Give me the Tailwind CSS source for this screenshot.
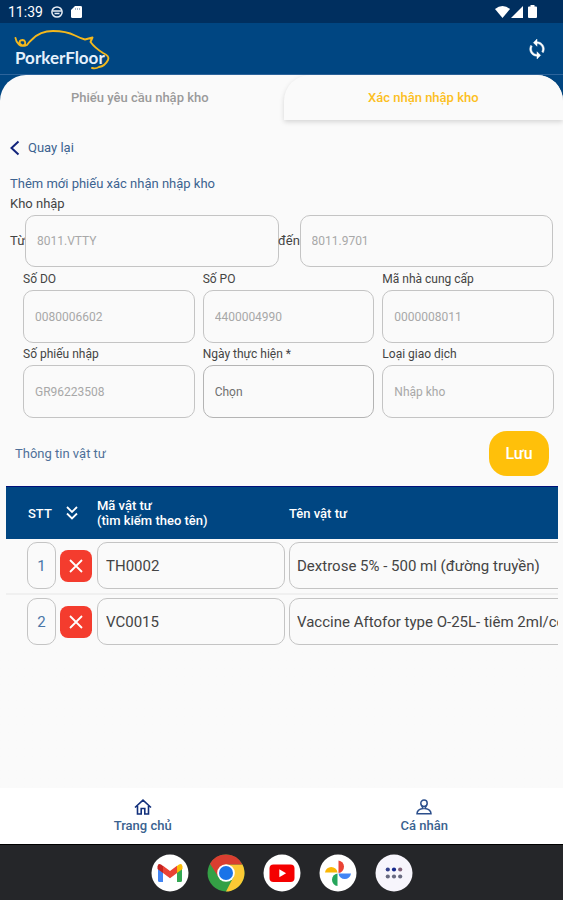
<!DOCTYPE html>
<html lang="vi">
<head>
<meta charset="utf-8">
<meta name="viewport" content="width=device-width, initial-scale=1">
<title>PorkerFloor</title>
<script src="https://cdn.jsdelivr.net/npm/@tailwindcss/browser@4"></script>
</head>
<body class="flex min-h-screen flex-col bg-[#fafafa] font-[Roboto,'Noto_Sans',sans-serif] text-[#444]">

<!-- Status bar -->
<div class="flex h-[23px] items-center justify-between bg-[#002f5f] px-2 text-white">
  <div class="flex items-center gap-2">
    <span class="text-sm">11:39</span>
    <svg class="size-3" viewBox="0 0 12 12" fill="none" stroke="#e8eef5" stroke-width="1.5"><circle cx="6" cy="6" r="5.1"/><path d="M1.5 5h9M3.5 7.5h5"/></svg>
    <svg class="h-3 w-[11px]" viewBox="0 0 11 12" fill="#fff"><path d="M4 0h5.5Q11 0 11 1.200V10.800Q11 12 9.500 12H1.500Q0 12 0 10.800V4Z"/><path d="M4.500 2v2M6.500 2v2M8.500 2v2" stroke="#8fa5bc" stroke-width=".8"/></svg>
  </div>
  <div class="mr-[18px] flex items-center gap-px">
    <svg class="h-3 w-[15px]" viewBox="0 0 15 12" fill="#fff"><path d="M0 3Q7.500-3 15 3L7.500 12Z"/></svg>
    <svg class="size-3" viewBox="0 0 12 12" fill="#fff"><path d="M12 0V12H0Z"/></svg>
    <svg class="ml-1 h-[13px] w-[9px]" viewBox="0 0 9 13" fill="#fff"><path d="M2.500 0h4v1.500H8q1 0 1 1V12q0 1-1 1H1q-1 0-1-1V2.500q0-1 1-1h1.500Z"/></svg>
  </div>
</div>

<!-- App bar -->
<header class="flex h-[52px] items-center justify-between border-b border-[#2d649b] bg-[#004682] pr-4 pl-3">
  <svg class="h-[44px] w-[100px]" viewBox="0 0 100 44" role="img" aria-label="PorkerFloor">
    <g fill="none" stroke="#f4b81c" stroke-width="1.900" stroke-linecap="round" stroke-linejoin="round">
      <path d="M3.500 11Q4 15 7 17.500Q10 20 13 17.500Q14 13.500 10.500 13Q6.500 13.500 8 16.500Q11 20 15 18Q17 15 20 12.500Q28 4 41 4Q54 4 63 8.500Q69 11.500 73 12.500L80.500 10.500L78.500 15Q83 21 91 26Q98 29 96 33Q93 39 87 40Q84 42 80 41"/>
    </g>
    <text x="3" y="37" font-family="Lato, sans-serif" font-size="17" font-weight="700" fill="#e6f1fc">PorkerFloor</text>
  </svg>
  <button type="button" aria-label="Đồng bộ">
    <svg class="size-5" viewBox="2 1 20 22" fill="#fff"><path d="M12 4V1L8 5l4 4V6c3.310 0 6 2.690 6 6 0 1.010-.25 1.970-.7 2.800l1.460 1.460C19.540 15.030 20 13.570 20 12c0-4.420-3.580-8-8-8zm0 14c-3.310 0-6-2.690-6-6 0-1.010.25-1.970.7-2.800L5.240 7.740C4.460 8.970 4 10.430 4 12c0 4.420 3.580 8 8 8v3l4-4-4-4v3z" stroke="#fff" stroke-width=".5"/></svg>
  </button>
</header>

<main class="flex-1 bg-linear-to-b from-[#004682] from-[30px] to-[#fafafa] to-[30px]">
  <div class="rounded-t-[26px] bg-[#fafafa]">
    <nav class="grid h-[45px] grid-cols-2 gap-1 overflow-visible text-[13px] font-medium">
      <a href="#" class="flex items-center justify-center text-[#9a9a9a]">Phiếu yêu cầu nhập kho</a>
      <a href="#" aria-current="page" class="flex items-center justify-center rounded-t-[26px] bg-[#fafafa] text-[#fcbf22] shadow-[0_2px_5px_rgba(0,0,0,0.15)]">Xác nhận nhập kho</a>
    </nav>

    <form>
      <div class="px-[10px] pt-[18px]">
        <a href="#" class="flex h-5 w-fit items-center gap-2 text-[13px] text-[#3c6390]">
          <svg class="h-4 w-[10px]" viewBox="0 0 10 16" fill="none" stroke="#12247c" stroke-width="2"><path d="M8.500 1.500L1.500 8L8.500 14.500"/></svg>
          Quay lại
        </a>
        <h1 class="mt-4 text-[13px] leading-5 text-[#3c6390]">Thêm mới phiếu xác nhận nhập kho</h1>
        <p class="text-[13px] leading-5">Kho nhập</p>
        <div class="mt-px flex items-center">
          <label for="from" class="w-[15px] shrink-0 text-[13px] whitespace-nowrap">Từ</label>
          <input id="from" readonly value="8011.VTTY" class="h-[52px] w-0 flex-1 rounded-[10px] border border-[#c4c4c4] px-[11px] text-[12px] text-[#a8a8a8]">
          <label for="to" class="flex w-[21px] shrink-0 justify-center text-[13px] whitespace-nowrap">đến</label>
          <input id="to" readonly value="8011.9701" class="h-[52px] w-0 flex-1 rounded-[10px] border border-[#c4c4c4] px-[11px] text-[12px] text-[#a8a8a8]">
        </div>
      </div>

      <div class="grid grid-cols-3 gap-x-2 pt-1 pr-[9px] pl-[23px]">
        <div>
          <label for="do" class="block text-[12px] leading-4">Số DO</label>
          <input id="do" readonly value="0080006602" class="mt-[3px] h-[53px] w-full rounded-[10px] border border-[#c4c4c4] px-[11px] text-[12px] text-[#a8a8a8]">
        </div>
        <div>
          <label for="po" class="block text-[12px] leading-4">Số PO</label>
          <input id="po" readonly value="4400004990" class="mt-[3px] h-[53px] w-full rounded-[10px] border border-[#c4c4c4] px-[11px] text-[12px] text-[#a8a8a8]">
        </div>
        <div>
          <label for="vendor" class="block text-[12px] leading-4">Mã nhà cung cấp</label>
          <input id="vendor" readonly value="0000008011" class="mt-[3px] h-[53px] w-full rounded-[10px] border border-[#c4c4c4] px-[11px] text-[12px] text-[#a8a8a8]">
        </div>
        <div class="mt-[3px]">
          <label for="receipt" class="block text-[12px] leading-4">Số phiếu nhập</label>
          <input id="receipt" readonly value="GR96223508" class="mt-[3px] h-[53px] w-full rounded-[10px] border border-[#c4c4c4] px-[11px] text-[12px] text-[#a8a8a8]">
        </div>
        <div class="mt-[3px]">
          <label for="date" class="block text-[12px] leading-4">Ngày thực hiện *</label>
          <input id="date" placeholder="Chọn" class="mt-[3px] h-[53px] w-full rounded-[10px] border border-[#b4b4b4] px-[11px] text-[12px] placeholder:text-[#707070]">
        </div>
        <div class="mt-[3px]">
          <label for="type" class="block text-[12px] leading-4">Loại giao dịch</label>
          <input id="type" readonly value="Nhập kho" class="mt-[3px] h-[53px] w-full rounded-[10px] border border-[#c4c4c4] px-[11px] text-[12px] text-[#a8a8a8]">
        </div>
      </div>

      <div class="flex items-center justify-between pt-[13px] pr-[14px] pl-[15px]">
        <h2 class="text-[13px] text-[#4f7099]">Thông tin vật tư</h2>
        <button type="submit" class="h-[45px] w-[60px] rounded-[18px] bg-[#ffc00a] text-base font-medium text-white">Lưu</button>
      </div>

      <div class="mt-[10px] mr-[5px] ml-[6px] overflow-hidden">
        <table class="w-[760px] table-fixed border-separate border-spacing-0">
          <colgroup><col class="w-[54px]"><col class="w-[37px]"><col class="w-[192px]"><col></colgroup>
          <thead>
            <tr class="h-[53px] bg-[#004682] text-left text-[13px] leading-[15px] text-white">
              <th class="border-t border-[#00107a] p-0 pl-[22px] font-medium">STT</th>
              <th class="border-t border-[#00107a] p-0 pl-[6px]">
                <button type="button" aria-label="Sắp xếp" class="block"><svg class="h-[14px] w-3" viewBox="0 0 12 14" fill="none" stroke="#fff" stroke-width="1.800"><path d="M1 1l5 5 5-5M1 7.500l5 5 5-5"/></svg></button>
              </th>
              <th class="border-t border-[#00107a] p-0 font-medium">Mã vật tư<br>(tìm kiếm theo tên)</th>
              <th class="border-t border-[#00107a] p-0 font-medium">Tên vật tư</th>
            </tr>
          </thead>
          <tbody>
            <tr class="h-[56px] align-top">
              <td class="border-b-2 border-[#f0f0f0] p-0 pt-[3px] pl-[21px]"><input aria-label="STT 1" readonly value="1" class="block h-[47px] w-[29px] rounded-[10px] border border-[#c4c4c4] text-center text-[15px] text-[#4a76a8]"></td>
              <td class="border-b-2 border-[#f0f0f0] p-0 pt-[11px]"><button type="button" aria-label="Xóa dòng 1" class="flex size-8 items-center justify-center rounded-lg bg-[#f43c2e]"><svg class="size-[14px]" viewBox="0 0 14 14" stroke="#fff" stroke-width="1.800"><path d="M1 1l12 12M13 1L1 13"/></svg></button></td>
              <td class="border-b-2 border-[#f0f0f0] p-0 pt-[3px]"><input aria-label="Mã vật tư 1" value="TH0002" class="block h-[47px] w-[188px] rounded-[10px] border border-[#c4c4c4] px-2 text-[15px]"></td>
              <td class="border-b-2 border-[#f0f0f0] p-0 pt-[3px]"><input aria-label="Tên vật tư 1" value="Dextrose 5% - 500 ml (đường truyền)" class="block h-[47px] w-full rounded-[10px] border border-[#c4c4c4] px-[7px] text-[15px]"></td>
            </tr>
            <tr class="h-[56px] align-top">
              <td class="p-0 pt-[3px] pl-[21px]"><input aria-label="STT 2" readonly value="2" class="block h-[47px] w-[29px] rounded-[10px] border border-[#c4c4c4] text-center text-[15px] text-[#4a76a8]"></td>
              <td class="p-0 pt-[11px]"><button type="button" aria-label="Xóa dòng 2" class="flex size-8 items-center justify-center rounded-lg bg-[#f43c2e]"><svg class="size-[14px]" viewBox="0 0 14 14" stroke="#fff" stroke-width="1.800"><path d="M1 1l12 12M13 1L1 13"/></svg></button></td>
              <td class="p-0 pt-[3px]"><input aria-label="Mã vật tư 2" value="VC0015" class="block h-[47px] w-[188px] rounded-[10px] border border-[#c4c4c4] px-2 text-[15px]"></td>
              <td class="p-0 pt-[3px]"><input aria-label="Tên vật tư 2" value="Vaccine Aftofor type O-25L- tiêm 2ml/con" class="block h-[47px] w-full rounded-[10px] border border-[#c4c4c4] px-[7px] text-[15px]"></td>
            </tr>
          </tbody>
        </table>
      </div>
    </form>
  </div>
</main>

<!-- Bottom navigation -->
<nav class="grid h-[56px] grid-cols-2 bg-white text-[13px] font-medium text-[#3a628f]">
  <a href="#" class="flex flex-col items-center justify-center gap-[3px] pl-1">
    <svg class="h-4 w-[18px]" viewBox="0 0 18 16" fill="none" stroke="#12307c" stroke-width="1.600"><path d="M1 8.500L9 1.200L17 8.500M3.500 7V15H7.200V9.500H10.800V15H14.500V7"/></svg>
    <span class="leading-4">Trang chủ</span>
  </a>
  <a href="#" class="flex flex-col items-center justify-center gap-[3px] pl-1">
    <svg class="h-4 w-[18px]" viewBox="0 0 18 16" fill="none" stroke="#2c4f8c" stroke-width="1.500"><circle cx="9" cy="4.200" r="3.200"/><path d="M6.800 6.800L8 9.500Q2 10.500 2 14.800H16Q16 10.500 10 9.500L11.200 6.800"/></svg>
    <span class="leading-4">Cá nhân</span>
  </a>
</nav>

<!-- System dock -->
<footer class="flex h-[56px] items-center justify-center gap-[18px] border-t border-black bg-[#252629]">
  <button type="button" aria-label="Gmail"><svg class="block size-[38px]" viewBox="0 0 38 38"><circle cx="19" cy="19" r="18.500" fill="#fff"/><path d="M7 12v14.500q0 1.500 1.500 1.500H12V16Z" fill="#4285f4"/><path d="M26 16v12h3.500q1.500 0 1.500-1.500V12Z" fill="#34a853"/><path d="M26 12l2-1.500q3-1.500 3.500 2V15L26 19Z" fill="#fbbc04"/><path d="M12 12l-2-1.500q-3-1.500-3.500 2V15L12 19Z" fill="#c5221f"/><path d="M12 11.800l7 5.200l7-5.200V19l-7 5.300L12 19Z" fill="#ea4335"/></svg></button>
  <button type="button" aria-label="Chrome"><svg class="block size-[38px]" viewBox="0 0 38 38"><circle cx="19" cy="19" r="18.500" fill="#34a045"/><path d="M19 10.500H35.400A18.500 18.500 0 0 1 19 37.500L26.400 23.300Z" fill="#fcc934"/><path d="M3 9.800A18.500 18.500 0 0 1 35.400 10.500H19L11.600 23.300Z" fill="#da3e30"/><circle cx="19" cy="19" r="8.800" fill="#fff"/><circle cx="19" cy="19" r="7" fill="#1a73e8"/></svg></button>
  <button type="button" aria-label="YouTube"><svg class="block size-[38px]" viewBox="0 0 38 38"><circle cx="19" cy="19" r="18.500" fill="#fff"/><rect x="6.500" y="10.500" width="25" height="17.500" rx="4" fill="#f50000"/><path d="M16.300 15.300v8l6.800-4Z" fill="#fff"/></svg></button>
  <button type="button" aria-label="Photos"><svg class="block size-[38px]" viewBox="0 0 38 38"><circle cx="19" cy="19" r="18.500" fill="#fff"/><path d="M19.500 6.500a6.300 6.300 0 0 1 0 12.500Z" fill="#ea4335"/><path d="M32 19.500a6.300 6.300 0 0 1-12.500 0Z" fill="#4285f4"/><path d="M18.500 32a6.300 6.300 0 0 1 0-12.500Z" fill="#26a65b"/><path d="M6 18.500a6.300 6.300 0 0 1 12.500 0Z" fill="#fbb704"/></svg></button>
  <button type="button" aria-label="Tất cả ứng dụng"><svg class="block size-[38px]" viewBox="0 0 38 38"><circle cx="19" cy="19" r="18.500" fill="#f7f5fc"/><g fill="#686a80"><circle cx="12.800" cy="15.500" r="2.100" fill="#34418c"/><circle cx="19" cy="15.500" r="2.100" fill="#16298c"/><circle cx="25.200" cy="15.500" r="2.100" fill="#806078"/><circle cx="12.800" cy="22.500" r="2.100"/><circle cx="19" cy="22.500" r="2.100"/><circle cx="25.200" cy="22.500" r="2.100"/></g></svg></button>
</footer>
</body>
</html>
